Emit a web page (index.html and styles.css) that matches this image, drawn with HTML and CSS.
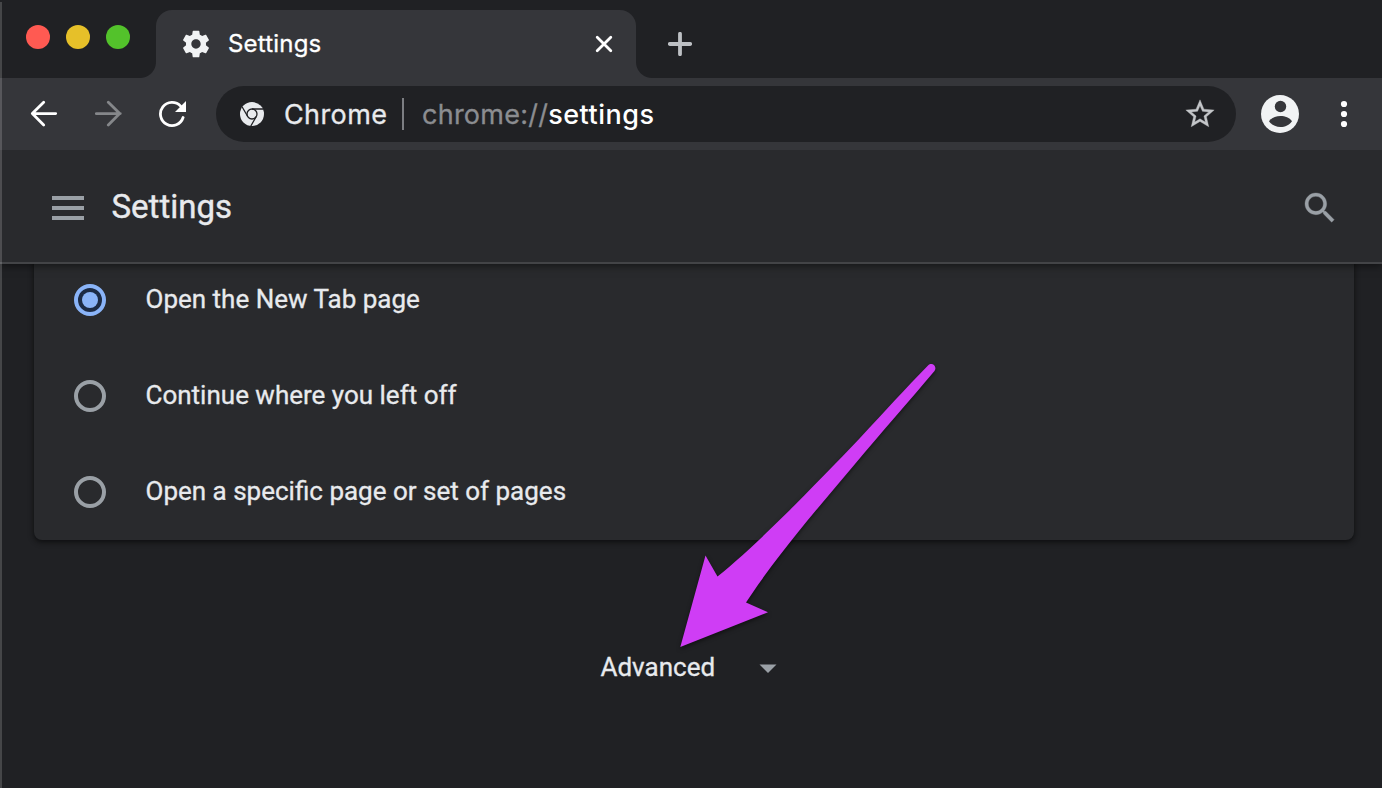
FILE: index.html
```html
<!DOCTYPE html>
<html lang="en">
<head>
  <meta charset="UTF-8">
  <meta name="viewport" content="width=device-width, initial-scale=1">
  <title>Settings</title>
  <link rel="stylesheet" href="styles.css">
</head>
<body>

<div class="window">
  <div class="tab-strip">
    <div class="lights">
      <span class="light red"></span>
      <span class="light yellow"></span>
      <span class="light green"></span>
    </div>
    <div class="tab">
      <svg class="gear" width="32" height="32" viewBox="0 0 24 24"><path fill="#f1f3f4" d="M19.43 12.98c.04-.32.07-.64.07-.98s-.03-.66-.07-.98l2.11-1.65c.19-.15.24-.42.12-.64l-2-3.46c-.12-.22-.39-.3-.61-.22l-2.49 1c-.52-.4-1.08-.73-1.69-.98l-.38-2.65C14.46 2.18 14.25 2 14 2h-4c-.25 0-.46.18-.49.42l-.38 2.65c-.61.25-1.17.59-1.69.98l-2.49-1c-.23-.09-.49 0-.61.22l-2 3.46c-.13.22-.07.49.12.64l2.11 1.65c-.04.32-.07.65-.07.98s.03.66.07.98l-2.11 1.65c-.19.15-.24.42-.12.64l2 3.46c.12.22.39.3.61.22l2.49-1c.52.4 1.08.73 1.69.98l.38 2.65c.03.24.24.42.49.42h4c.25 0 .46-.18.49-.42l.38-2.65c.61-.25 1.17-.59 1.69-.98l2.49 1c.23.09.49 0 .61-.22l2-3.46c.12-.22.07-.49-.12-.64l-2.11-1.65zM12 15.5c-1.93 0-3.5-1.57-3.5-3.5s1.57-3.5 3.5-3.5 3.5 1.57 3.5 3.5-1.57 3.5-3.5 3.5z"/></svg>
      <span class="tab-title">Settings</span>
      <svg class="close" width="20" height="20" viewBox="0 0 20 20"><path d="M3.2 3.2l13.6 13.6M16.8 3.2L3.2 16.8" stroke="#fff" stroke-width="2.8" stroke-linecap="round"/></svg>
    </div>
    <svg class="new-tab" width="24" height="24" viewBox="0 0 24 24"><path d="M12 1.8v20.4M1.8 12h20.4" stroke="#bdc0c4" stroke-width="3.8" stroke-linecap="round"/></svg>
  </div>

  <div class="toolbar">
    <svg class="back" width="28" height="28" viewBox="0 0 28 28"><path d="M25.700 13.600H3M13.700 2.200L2.300 13.600L13.700 25" fill="none" stroke="#fff" stroke-width="2.800" stroke-linecap="round" stroke-linejoin="round"/></svg>
    <svg class="forward" width="28" height="28" viewBox="0 0 28 28"><path d="M1.300 13.600h24M13.300 2.200L24.700 13.600L13.300 25" fill="none" stroke="#85878a" stroke-width="2.800" stroke-linecap="round" stroke-linejoin="round"/></svg>
    <svg class="reload" width="28" height="28" viewBox="0 0 28 28"><path d="M24.100 17.500A11.600 11.600 0 1 1 21.600 6.100" fill="none" stroke="#fff" stroke-width="2.800" stroke-linecap="round"/><path d="M27 1v11H16z" fill="#fff"/></svg>
    <div class="omnibox">
      <svg class="chrome-logo" width="24" height="24" viewBox="0 0 24 24">
        <circle cx="12" cy="12" r="12" fill="#e8eaed"/>
        <g fill="none" stroke="#202124" stroke-width="1.3">
          <circle cx="12" cy="12" r="5"/>
          <path d="M12 7h11M7.7 14.5L2.2 5M16.3 14.5L10.8 24"/>
        </g>
      </svg>
      <span class="site">Chrome</span>
      <span class="divider"></span>
      <span class="url"><span class="scheme">chrome://</span><span class="host">settings</span></span>
      <svg class="star" width="34" height="34" viewBox="0 0 24 24"><path fill="#c4c6c9" stroke="#c4c6c9" stroke-width=".25" d="M22 9.24l-7.19-.62L12 2 9.19 8.63 2 9.24l5.46 4.73L5.82 21 12 17.27 18.18 21l-1.63-7.03L22 9.24zM12 15.4l-3.76 2.27 1-4.28-3.32-2.88 4.38-.38L12 6.1l1.71 4.04 4.38.38-3.32 2.88 1 4.28L12 15.4z"/></svg>
    </div>
    <svg class="avatar" width="38" height="38" viewBox="0 0 38 38">
      <circle cx="19" cy="19" r="19" fill="#f1f3f4"/>
      <circle cx="19.5" cy="11.5" r="5.7" fill="#35363a"/>
      <path d="M8 26.2C10.500 22.500 15 21 19.500 21S28.500 22.500 31 26.200C28.500 30 24 32 19.500 32S10.500 30 8 26.200z" fill="#35363a"/>
    </svg>
    <svg class="menu-dots" width="8" height="28" viewBox="0 0 8 28" fill="#fff"><circle cx="4" cy="4" r="3.1"/><circle cx="4" cy="14" r="3.1"/><circle cx="4" cy="24" r="3.1"/></svg>
  </div>

  <header class="header">
    <div class="hamburger"><span></span><span></span><span></span></div>
    <h1>Settings</h1>
    <svg class="search" width="40" height="40" viewBox="0 0 24 24"><path fill="#9aa0a6" stroke="#9aa0a6" stroke-width=".2" d="M15.500 14h-.79l-.28-.27C15.410 12.590 16 11.110 16 9.500 16 5.910 13.090 3 9.500 3S3 5.910 3 9.500 5.910 16 9.500 16c1.610 0 3.090-.59 4.230-1.570l.27.28v.79l5 4.990L20.490 19l-4.990-5zm-6 0C7.010 14 5 11.990 5 9.500S7.010 5 9.500 5 14 7.010 14 9.500 11.990 14 9.500 14z"/></svg>
  </header>

  <main class="content">
    <div class="card">
      <div class="option"><span class="radio checked"></span><span class="label">Open the New Tab page</span></div>
      <div class="option"><span class="radio"></span><span class="label">Continue where you left off</span></div>
      <div class="option"><span class="radio"></span><span class="label">Open a specific page or set of pages</span></div>
    </div>
    <div class="advanced">
      <span>Advanced</span>
      <svg width="18" height="10" viewBox="0 0 18 10"><path d="M0.500 .5h17L9 9z" fill="#9aa0a6"/></svg>
    </div>
  </main>

  <svg class="arrow" width="270" height="300" viewBox="670 355 270 300">
    <path fill="#cf3df5" d="M680.300 647L705.500 555.500L717.500 576.500C757 545 815 485 860 438C886 410 905 389 928 365.500C932.500 361.500 937.500 367 934.500 371C910 400 881 433 855 464C817 509 778 554 746 602.500L768 612.300z"/>
  </svg>
</div>

</body>
</html>
```

FILE: styles.css
```css
* { box-sizing: border-box; }
body {
  margin: 0;
  background: #202124;
  color: #e8eaed;
  font-family: Roboto, sans-serif;
}
svg { display: block; flex: none; }
.window {
  position: relative;
  display: flex;
  flex-direction: column;
  height: 788px;
  overflow: hidden;
}
.window::after {
  content: "";
  position: absolute;
  left: 0;
  top: 2px;
  bottom: 0;
  z-index: 2;
  width: 2px;
  background: rgba(255,255,255,0.17);
}

/* tabs */
.tab-strip { display: flex; height: 78px; padding-left: 26px; }
.lights { display: flex; gap: 16px; width: 130px; padding-top: 25px; }
.light { width: 24px; height: 24px; border-radius: 50%; }
.red { background: #ff5a52; }
.yellow { background: #e6c029; }
.green { background: #53c22b; }
.tab {
  position: relative;
  display: flex;
  align-items: center;
  width: 480px;
  height: 68px;
  margin-top: 10px;
  padding: 0 22px 0 24px;
  border-radius: 16px 16px 0 0;
  background: #35363a;
}
.tab::before, .tab::after {
  content: "";
  position: absolute;
  bottom: 0;
  width: 16px;
  height: 16px;
}
.tab::before { left: -16px; background: radial-gradient(circle at 0 0, transparent 15.5px, #35363a 16.5px); }
.tab::after { right: -16px; background: radial-gradient(circle at 100% 0, transparent 15.5px, #35363a 16.5px); }
.tab-title {
  margin: 0 0 2px 16px;
  color: #fff;
  font: 24px Inter, sans-serif;
  letter-spacing: 0.2px;
  -webkit-text-stroke: 0.3px #fff;
}
.close { margin-left: auto; }
.new-tab { margin: 32px 0 0 32px; }

/* toolbar */
.toolbar {
  position: relative;
  z-index: 1;
  display: flex;
  align-items: center;
  height: 72px;
  padding: 0 34px 0 30px;
  background: #35363a;
}
.forward { margin-left: 37px; }
.reload { margin-left: 36px; }
.omnibox {
  display: flex;
  align-items: center;
  width: 1020px;
  height: 56px;
  margin-left: 29px;
  padding: 0 19px 0 24px;
  border-radius: 28px;
  background: #202124;
  font: 27px Inter, sans-serif;
}
.site { width: 102px; margin-left: 20px; letter-spacing: 0.4px; -webkit-text-stroke: 0.3px #e8eaed; }
.divider { width: 2px; height: 32px; margin: 0 18px 0 16px; background: #7c7e82; }
.scheme { color: #8b8d91; letter-spacing: 0.25px; -webkit-text-stroke: 0.3px #8b8d91; }
.host { color: #fff; font-weight: 500; letter-spacing: 0.5px; }
.star { margin-left: auto; }
.avatar { margin-left: 25px; }
.menu-dots { margin-left: auto; }

/* page header */
.header {
  position: relative;
  display: flex;
  align-items: center;
  height: 114px;
  padding: 0 42px 0 52px;
  border-bottom: 2px solid #434447;
  background: #292a2d;
  box-shadow: 0 2px 8px rgba(0,0,0,0.5);
}
.hamburger { display: flex; flex-direction: column; gap: 6px; margin-top: 4px; }
.hamburger span { width: 32px; height: 4px; background: #9aa0a6; }
h1 {
  margin: 1px 0 0 27.500px;
  font-size: 33px;
  font-weight: 400;
  -webkit-text-stroke: 0.4px #e8eaed;
}
.search { margin: 4px 0 0 auto; }

/* page */
.content { flex: 1; }
.card {
  height: 288px;
  margin: -12px 28px 0 34px;
  border-radius: 8px;
  background: #292a2d;
  box-shadow: 0 2px 4px rgba(0,0,0,0.4), 0 2px 6px 1px rgba(0,0,0,0.2);
}
.option { display: flex; align-items: center; height: 96px; padding-left: 40px; }
.radio {
  display: flex;
  width: 32px;
  height: 32px;
  border: 4px solid #9aa0a6;
  border-radius: 50%;
}
.checked { border-color: #8ab4f8; background: #1c2b45; }
.checked::after {
  content: "";
  width: 16px;
  height: 16px;
  margin: auto;
  border-radius: 50%;
  background: #8ab4f8;
}
.label, .advanced { font-size: 26px; -webkit-text-stroke: 0.3px #e8eaed; }
.label { margin: 0 0 2px 39.5px; }
.advanced {
  display: flex;
  align-items: center;
  margin: 112px 0 0 600.5px;
}
.advanced svg { margin: 3px 0 0 44px; }

.arrow { position: absolute; left: 670px; top: 355px; filter: drop-shadow(0 2px 2px rgba(0,0,0,0.5)); }
```
